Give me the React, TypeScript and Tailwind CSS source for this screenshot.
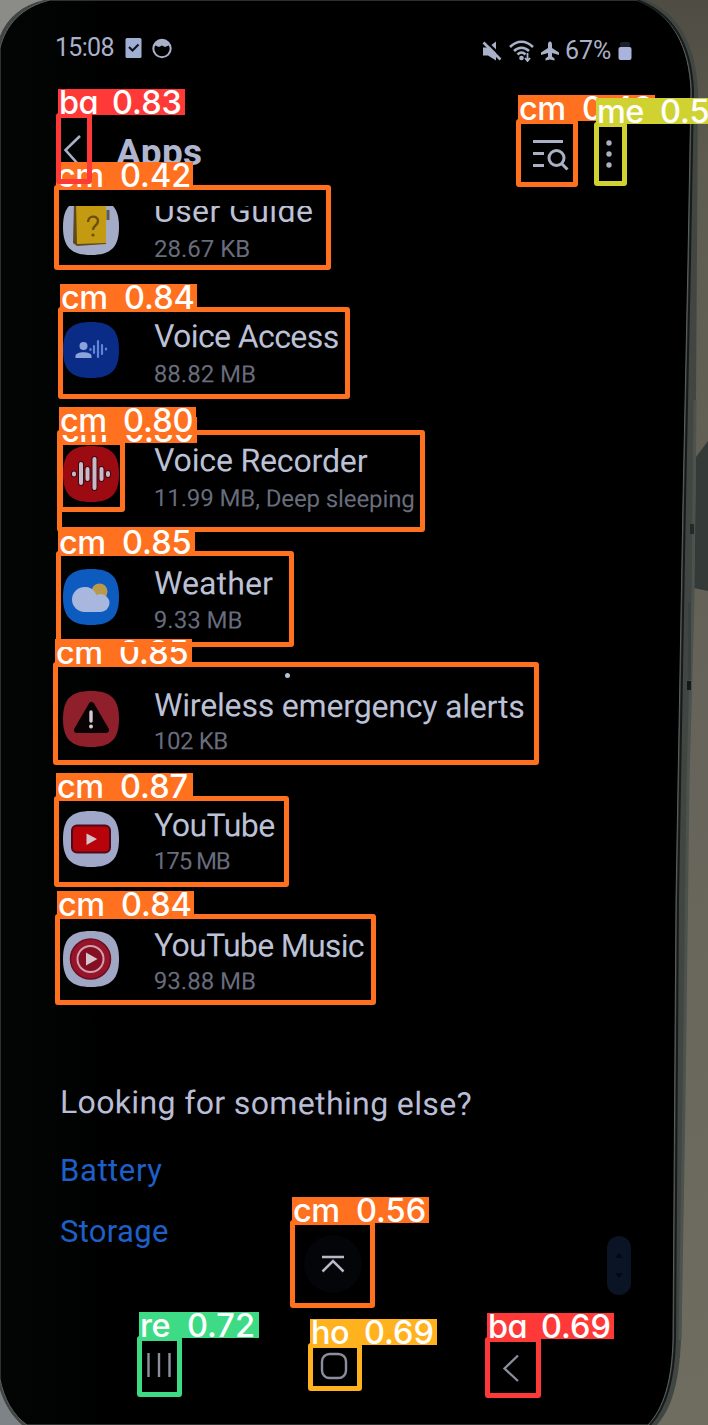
import type { ReactNode } from 'react';

function Backdrop() {
  return (
    <svg className="absolute inset-0" width="708" height="1425" viewBox="0 0 708 1425" aria-hidden="true">
      <defs>
        <linearGradient id="wall" x1="0" y1="0" x2="0" y2="1">
          <stop offset="0" stopColor="#4f4c43" />
          <stop offset="0.12" stopColor="#5e5b50" />
          <stop offset="0.5" stopColor="#66635a" />
          <stop offset="1" stopColor="#6f6c60" />
        </linearGradient>
        <linearGradient id="sheen" x1="0" y1="0" x2="1" y2="0">
          <stop offset="0" stopColor="#030505" />
          <stop offset="0.1" stopColor="#010303" />
          <stop offset="0.14" stopColor="#000000" />
        </linearGradient>
      </defs>
      <rect width="708" height="1425" fill="url(#wall)" />
      <rect width="80" height="70" fill="#8b8b88" />
      <rect y="1360" width="60" height="65" fill="#7d8386" />
      <path d="M708 441L696 457L694 588L708 591Z" fill="#343a38" />
      <path d="M44 0C22 5 7 18 0 36V1390C5 1405 12 1416 22 1425H657C671 1409 679 1385 681 1340L688 780L696 400L698 90C696 48 680 12 645 0Z" fill="#414643" />
      <path d="M695 400L693 600L688 780L684 1100L680 1340" fill="none" stroke="#4c524e" strokeWidth="3" />
      <path d="M50 0C22 7 6 24 0 48V1379C4 1399 13 1415 27 1425H648C664 1408 672 1380 673 1340L676 900L683 500L688 260L691 90C689 48 674 14 636 0Z" fill="url(#sheen)" stroke="#59605d" strokeWidth="1" />
      <path d="M637 0C675 14 691 48 693 90L690 260L685 500L678 900L675 1340C674 1380 666 1408 650 1425" fill="none" stroke="#161a19" strokeWidth="2" />
      <rect x="690" y="524" width="4" height="10" fill="#252a28" />
      <rect x="688" y="602" width="3" height="78" fill="#3a403d" />
      <rect x="687" y="681" width="4" height="9" fill="#151817" />
    </svg>
  );
}

function Squircle({ fill, children }: { fill: string; children: ReactNode }) {
  return (
    <svg className="h-[58px] w-[58px] shrink-0" viewBox="0 0 58 58">
      <path d="M29 1C49 1 57 9 57 29S49 57 29 57S1 49 1 29S9 1 29 1Z" fill={fill} />
      {children}
    </svg>
  );
}

const guideIcon = (
  <Squircle fill="#a4abc6">
    <path d="M12 4H44V46L15 48L11 45Z" fill="#5e4a22" />
    <path d="M14 4H44V45L15 46Z" fill="#c39a10" />
    <path d="M46 12V22" stroke="#5f5b49" strokeWidth="3" />
    <path d="M26 24C26 17 36 17 36 23C36 28 31 27 31 32" fill="none" stroke="#6d4d0d" strokeWidth="2.4" />
    <circle cx="31" cy="37" r="1.6" fill="#6d4d0d" />
  </Squircle>
);

const accessIcon = (
  <Squircle fill="#0b2c86">
    <circle cx="21.500" cy="25" r="4" fill="#8ba3da" />
    <path d="M13.500 37V35C13.500 30 29.500 30 29.500 35V37Z" fill="#8ba3da" />
    <path d="M28.500 28V29M32 25V32M36 20V36M40 24V33M44 27.500V28.500" stroke="#5f85d6" strokeWidth="2.200" strokeLinecap="round" />
  </Squircle>
);

const recorderIcon = (
  <Squircle fill="#9c0b12">
    <g stroke="#3d0a12" strokeWidth="6" strokeLinecap="round">
      <path d="M12 28.500V29.500M19 19V38M25.500 24V34M32.500 14V43M39.500 24V34M46 28V30" />
    </g>
    <g stroke="#c9bac8" strokeWidth="4" strokeLinecap="round">
      <path d="M12 28.500V29.500M19 19V38M25.500 24V34M32.500 14V43M39.500 24V34M46 28V30" />
    </g>
  </Squircle>
);

const weatherIcon = (
  <Squircle fill="#0e5bc0">
    <circle cx="37.500" cy="23.500" r="8" fill="#b99a4d" />
    <g fill="#a7b7dd">
      <circle cx="22.500" cy="31.500" r="12.500" />
      <circle cx="38.500" cy="35" r="9" />
      <path d="M22 19C29 19 32 22 34.500 27L39 30V44H22Z" />
    </g>
  </Squircle>
);

const alertIcon = (
  <Squircle fill="#8e1f2b">
    <path d="M29.500 15L44 40H15Z" fill="#0a0304" stroke="#0a0304" strokeWidth="6" strokeLinejoin="round" />
    <path d="M29 22V31" stroke="#d5cbd6" strokeWidth="3.400" strokeLinecap="round" />
    <circle cx="29" cy="36.500" r="2" fill="#d5cbd6" />
  </Squircle>
);

const youtubeIcon = (
  <Squircle fill="#a0a7c8">
    <rect x="10" y="15.500" width="38" height="27" rx="5" fill="#b9030b" stroke="#4d0a18" strokeWidth="2" />
    <path d="M24.500 23.500V35L35 29Z" fill="#d0c4cf" />
  </Squircle>
);

const musicIcon = (
  <Squircle fill="#a0a7c4">
    <circle cx="28.500" cy="29" r="20" fill="#97142a" stroke="#6a1020" strokeWidth="1.500" />
    <circle cx="28.500" cy="29" r="13" fill="#850f22" stroke="#cfa1ae" strokeWidth="2" />
    <path d="M24 22.500V35.500L35.500 29Z" fill="#d5c4cf" />
  </Squircle>
);

type AppEntry = {
  name: string;
  size: string;
  icon: ReactNode;
  height: string;
  nameStyle: string;
  sizeStyle: string;
  textOffset: string;
};

const apps: AppEntry[] = [
  { name: 'Voice Access', size: '88.82 MB', icon: accessIcon, height: 'h-[124px]', nameStyle: 'tracking-[-0.6px]', sizeStyle: 'leading-[38px]', textOffset: 'mt-[10px]' },
  { name: 'Voice Recorder', size: '11.99 MB, Deep sleeping', icon: recorderIcon, height: 'h-[123px]', nameStyle: 'tracking-[-0.15px]', sizeStyle: 'leading-[38px] tracking-[-0.1px]', textOffset: 'mt-[10px]' },
  { name: 'Weather', size: '9.33 MB', icon: weatherIcon, height: 'h-[123px]', nameStyle: 'tracking-[0.1px]', sizeStyle: 'leading-[36px]', textOffset: 'mt-[8px]' },
  { name: 'Wireless emergency alerts', size: '102 KB', icon: alertIcon, height: 'h-[121px]', nameStyle: 'tracking-[-0.18px]', sizeStyle: 'leading-[34px] tracking-[-0.4px]', textOffset: 'mt-[6px]' },
  { name: 'YouTube', size: '175 MB', icon: youtubeIcon, height: 'h-[120px]', nameStyle: 'tracking-[-0.5px]', sizeStyle: 'leading-[34px] tracking-[-1.1px]', textOffset: 'mt-[6px]' },
  { name: 'YouTube Music', size: '93.88 MB', icon: musicIcon, height: 'h-[120px]', nameStyle: 'tracking-[-0.7px]', sizeStyle: 'leading-[34px]', textOffset: 'mt-[6px]' },
];

function AppRow({ name, size, icon, height, nameStyle, sizeStyle, textOffset }: AppEntry) {
  return (
    <li className={`flex items-center pl-[62px] ${height}`}>
      {icon}
      <div className={`ml-[34px] origin-left rotate-[0.3deg] whitespace-nowrap ${textOffset}`}>
        <div className={`text-[32px] leading-[38px] text-[#bcc1d6] ${nameStyle}`}>{name}</div>
        <div className={`text-[24px] text-[#686c7c] ${sizeStyle}`}>{size}</div>
      </div>
    </li>
  );
}

function StatusBar() {
  return (
    <div className="flex h-[95px] items-start pl-[55px] pr-[76px] pt-[33px] text-[#a9b1c9]">
      <span className="w-[70px] text-[25px] leading-[30px] tracking-[-0.7px]">15:08</span>
      <svg className="mt-[4px] h-[22px] w-[17px]" viewBox="0 0 17 22">
        <rect x="0.500" y="1" width="16" height="20" rx="1.500" fill="#9fb0d4" />
        <path d="M4 10L7.500 13.500L13.500 7.500" fill="none" stroke="#10151f" strokeWidth="2.200" />
      </svg>
      <svg className="ml-[9px] mt-[4px] h-[22px] w-[22px]" viewBox="0 0 22 22">
        <circle cx="11" cy="11.500" r="8.700" fill="none" stroke="currentColor" strokeWidth="2" />
        <path d="M3 8C5 1 17 1 19 8L14 10L11 8.500L8 10Z" fill="currentColor" />
      </svg>
      <div className="ml-auto flex items-center pt-[3px]">
        <svg className="h-[20px] w-[20px]" viewBox="0 0 20 20">
          <path d="M1 6.500H6L14 0.500V19.500L6 14.500H1Z" fill="currentColor" />
          <path d="M2 -1.500L20 16" stroke="#000000" strokeWidth="2.500" />
          <path d="M1.500 1.500L18.500 18.500" stroke="currentColor" strokeWidth="2.600" />
        </svg>
        <svg className="ml-[7px] h-[22px] w-[25px]" viewBox="0 0 25 22">
          <g fill="none" stroke="currentColor" strokeWidth="2.500">
            <path d="M1 7C8 0 17 0 24 7" />
            <path d="M5 11C9.500 6.500 15.500 6.500 20 11" />
            <path d="M8.500 14.500C11 12 14 12 16.500 14.500" />
          </g>
          <circle cx="12.500" cy="18" r="2.300" fill="currentColor" />
          <path d="M18.500 13V20M16 18L18.500 21L21 18" fill="none" stroke="currentColor" strokeWidth="1.800" />
        </svg>
        <svg className="ml-[6px] h-[20px] w-[20px]" viewBox="0 0 20 20">
          <path d="M10 0.500C11.500 0.500 12 2 12 4V7L19 11.500V14L12 12V15.500L14.500 17.500V19.500L10 18.500L5.500 19.500V17.500L8 15.500V12L1 14V11.500L8 7V4C8 2 8.500 0.500 10 0.500Z" fill="currentColor" />
        </svg>
        <span className="ml-[5px] w-[51px] text-[25px] leading-[30px]">67%</span>
        <svg className="ml-[2px] h-[20px] w-[14px]" viewBox="0 0 14 20">
          <rect x="2" y="1" width="10" height="5" rx="1.500" fill="#1c1e28" />
          <rect x="0.500" y="6" width="13" height="13" rx="2" fill="#a9b3dc" />
        </svg>
      </div>
    </div>
  );
}

function TitleBar() {
  return (
    <header className="flex h-[111px] items-start pt-[36px] text-[#aab1c6]">
      <svg className="ml-[62px] mt-[2px] h-[34px] w-[22px]" viewBox="0 0 22 34">
        <path d="M18 3L3.500 17L16 31" fill="none" stroke="currentColor" strokeWidth="2.600" />
      </svg>
      <h1 className="ml-[32px] text-[37px] font-bold leading-[44px] tracking-[0.4px] text-[#b1b6d0]">Apps</h1>
      <svg className="ml-auto mt-[6px] h-[34px] w-[38px]" viewBox="0 0 38 34" fill="none" stroke="currentColor" strokeWidth="3">
        <path d="M2 4.500H32M2 16.500H13M2 28.500H13" />
        <circle cx="25.500" cy="21" r="7.500" />
        <path d="M30.500 26.500L36.500 32.500" />
      </svg>
      <svg className="ml-[34px] mr-[93px] mt-[8px] h-[32px] w-[12px]" viewBox="0 0 12 32" fill="currentColor">
        <circle cx="6" cy="4" r="2.700" />
        <circle cx="6" cy="15" r="2.700" />
        <circle cx="6" cy="26" r="2.700" />
      </svg>
    </header>
  );
}

type Detection = { kind: string; score: string; kindWidth: string; tone: string; edge: string; box: string; label: string };

const orange = { tone: 'bg-[#ff701f]', edge: 'border-[#ff701f]' };
const red = { tone: 'bg-[#ff3838]', edge: 'border-[#ff3838]' };
const wide = 'w-[63px]';

const detections: Detection[] = [
  { kind: 'cm', score: '0.49', kindWidth: wide, ...orange, box: 'left-[516px] top-[119px] w-[62px] h-[68px]', label: 'left-[518px] top-[95px] w-[137px]' },
  { kind: 'cm', score: '0.42', kindWidth: wide, ...orange, box: 'left-[54px] top-[185px] w-[277px] h-[85px]', label: 'left-[56px] top-[162px] w-[137px]' },
  { kind: 'me', score: '0.52', kindWidth: wide, tone: 'bg-[#cfd231]', edge: 'border-[#cfd231]', box: 'left-[594px] top-[122px] w-[33px] h-[64px]', label: 'left-[596px] top-[98px] w-[137px]' },
  { kind: 'cm', score: '0.56', kindWidth: wide, ...orange, box: 'left-[290px] top-[1220px] w-[85px] h-[88px]', label: 'left-[292px] top-[1197px] w-[137px]' },
  { kind: 'ho', score: '0.69', kindWidth: 'w-[53px]', tone: 'bg-[#ffb21d]', edge: 'border-[#ffb21d]', box: 'left-[308px] top-[1343px] w-[54px] h-[48px]', label: 'left-[310px] top-[1319px] w-[127px]' },
  { kind: 'ba', score: '0.69', kindWidth: 'w-[53px]', ...red, box: 'left-[485px] top-[1337px] w-[56px] h-[61px]', label: 'left-[487px] top-[1313px] w-[127px]' },
  { kind: 're', score: '0.72', kindWidth: 'w-[47px]', tone: 'bg-[#3ddb86]', edge: 'border-[#3ddb86]', box: 'left-[137px] top-[1336px] w-[45px] h-[61px]', label: 'left-[139px] top-[1312px] w-[120px]' },
  { kind: 'cm', score: '0.80', kindWidth: wide, ...orange, box: 'left-[58px] top-[440px] w-[67px] h-[72px]', label: 'left-[60px] top-[417px] w-[137px]' },
  { kind: 'cm', score: '0.80', kindWidth: wide, ...orange, box: 'left-[57px] top-[430px] w-[368px] h-[102px]', label: 'left-[59px] top-[407px] w-[137px]' },
  { kind: 'ba', score: '0.83', kindWidth: 'w-[53px]', ...red, box: 'left-[56px] top-[113px] w-[36px] h-[71px]', label: 'left-[58px] top-[89px] w-[127px]' },
  { kind: 'cm', score: '0.84', kindWidth: wide, ...orange, box: 'left-[58px] top-[307px] w-[292px] h-[92px]', label: 'left-[60px] top-[284px] w-[137px]' },
  { kind: 'cm', score: '0.84', kindWidth: wide, ...orange, box: 'left-[55px] top-[914px] w-[321px] h-[91px]', label: 'left-[57px] top-[891px] w-[137px]' },
  { kind: 'cm', score: '0.85', kindWidth: wide, ...orange, box: 'left-[53px] top-[662px] w-[486px] h-[103px]', label: 'left-[55px] top-[639px] w-[137px]' },
  { kind: 'cm', score: '0.85', kindWidth: wide, ...orange, box: 'left-[56px] top-[551px] w-[238px] h-[96px]', label: 'left-[58px] top-[529px] w-[137px]' },
  { kind: 'cm', score: '0.87', kindWidth: wide, ...orange, box: 'left-[54px] top-[796px] w-[235px] h-[91px]', label: 'left-[56px] top-[773px] w-[137px]' },
];

function DetectionMark({ kind, score, kindWidth, tone, edge, box, label }: Detection) {
  return (
    <>
      <div className={`absolute rounded-[3px] border-[5px] ${edge} ${box}`} />
      <div
        className={`absolute flex h-[26px] whitespace-nowrap pl-px font-['Inter',sans-serif] text-[32.5px] font-medium leading-[27px] text-white [font-feature-settings:'cv11'] ${tone} ${label}`}
      >
        <span className={`shrink-0 tracking-[-0.5px] ${kindWidth}`}>{kind}</span>
        <span>{score}</span>
      </div>
    </>
  );
}

export default function App() {
  return (
    <div className="relative h-[1425px] w-[708px] overflow-hidden bg-black font-['Roboto','Liberation_Sans',sans-serif]">
      <Backdrop />
      <main className="relative flex h-[1425px] flex-col">
        <StatusBar />
        <TitleBar />
        <section className="flex h-[82px] items-end overflow-hidden pl-[62px] pb-[32px]">
          {guideIcon}
          <div className="-mb-[12px] ml-[34px] whitespace-nowrap">
            <div className="text-[32px] leading-[38px] tracking-[0.4px] text-[#bcc1d6]">User Guide</div>
            <div className="text-[24px] leading-[38px] text-[#686c7c]">28.67 KB</div>
          </div>
        </section>
        <ul>
          {apps.map((app) => (
            <AppRow key={app.name} {...app} />
          ))}
        </ul>
        <section className="mt-[63px] flex flex-col items-start pl-[60px] text-[31px] leading-[40px] text-[#1e5fc8]">
          <h2 className="origin-left rotate-[0.3deg] text-[32px] tracking-[0.37px] text-[#b9bdd6]">Looking for something else?</h2>
          <a className="mt-[29px] tracking-[0.6px]">Battery</a>
          <a className="mt-[21px] tracking-[0.3px]">Storage</a>
        </section>
        <nav className="flex items-start pl-[146px] pt-[100px] text-[#8b8e9c]">
          <svg className="h-[26px] w-[26px]" viewBox="0 0 26 26">
            <path d="M2.500 1V25M13 1V25M23.500 1V25" stroke="currentColor" strokeWidth="2.400" />
          </svg>
          <svg className="ml-[148px] h-[28px] w-[28px]" viewBox="0 0 28 28">
            <rect x="2" y="2" width="24" height="24" rx="7.500" fill="none" stroke="currentColor" strokeWidth="2.400" />
          </svg>
          <svg className="ml-[153px] mt-[2px] h-[28px] w-[20px]" viewBox="0 0 20 28">
            <path d="M17 1.500L3.500 14.500L17 27" fill="none" stroke="currentColor" strokeWidth="2.300" />
          </svg>
        </nav>
      </main>
      <div className="absolute left-[285px] top-[673px] h-[5px] w-[5px] rounded-full bg-[#b3c4d4]" />
      <div className="absolute left-[304px] top-[1235px] flex h-[58px] w-[58px] items-center justify-center rounded-full bg-[#030508]">
        <svg className="h-[20px] w-[24px] text-[#b5bac6]" viewBox="0 0 24 20" fill="none" stroke="currentColor" strokeWidth="2.500">
          <path d="M1 3H23M1.500 17.500L12 7L22.500 17.500" />
        </svg>
      </div>
      <div className="absolute left-[607px] top-[1236px] flex h-[59px] w-[24px] flex-col items-center justify-center gap-[15px] rounded-full bg-[#0b1424]">
        <svg className="h-[5px] w-[8px]" viewBox="0 0 8 5">
          <path d="M0 5L4 0L8 5Z" fill="#040810" />
        </svg>
        <svg className="h-[5px] w-[8px]" viewBox="0 0 8 5">
          <path d="M0 0L4 5L8 0Z" fill="#040810" />
        </svg>
      </div>
      {detections.map((detection) => (
        <DetectionMark key={detection.box} {...detection} />
      ))}
    </div>
  );
}
